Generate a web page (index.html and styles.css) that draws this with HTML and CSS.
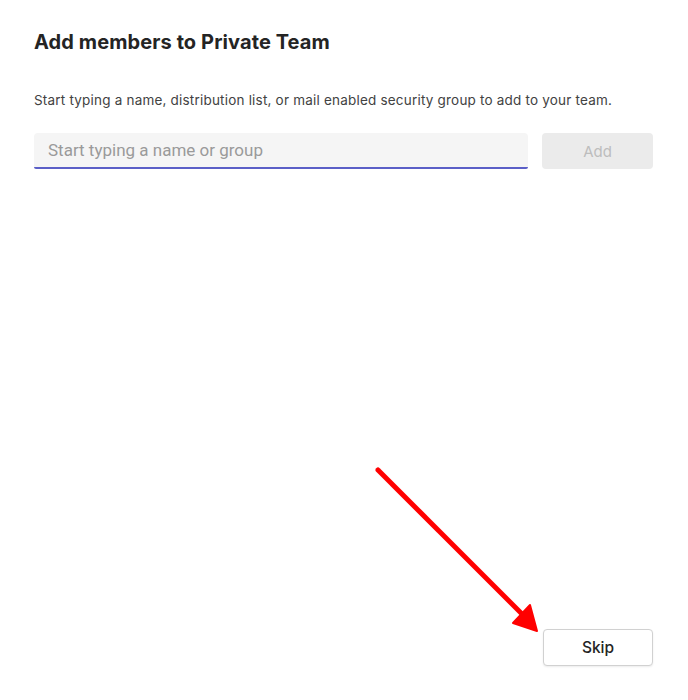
FILE: index.html
```html
<!DOCTYPE html>
<html>
<head>
<meta charset="utf-8">
<link rel="stylesheet" href="styles.css">
</head>
<body>
<div class="dialog">
  <h1 class="title">Add members to Private Team</h1>
  <p class="desc">Start typing a name, distribution list, or mail enabled security group to add to your team.</p>
  <div class="row">
    <div class="field"><input class="input" type="text" placeholder="Start typing a name or group"></div>
    <button class="btn btn-add" disabled>Add</button>
  </div>
  <div class="spacer"></div>
  <div class="footer">
    <button class="btn btn-skip">Skip</button>
  </div>
</div>
<svg class="arrow" width="688" height="700" viewBox="0 0 688 700">
  <line x1="378" y1="470" x2="522" y2="614" stroke="#f00" stroke-width="5" stroke-linecap="round"/>
  <polygon points="537,631 513,623 530,605" fill="#f00" stroke="#f00" stroke-width="2" stroke-linejoin="round"/>
</svg>
</body>
</html>
```
FILE: styles.css
```css
html, body {
  margin: 0;
  padding: 0;
  background: #fff;
}
body {
  width: 688px;
  height: 700px;
  position: relative;
  font-family: "Inter", "Liberation Sans", sans-serif;
  color: #242424;
}
.dialog {
  box-sizing: border-box;
  height: 700px;
  padding: 29px 35px 34px 34px;
  display: flex;
  flex-direction: column;
}
.title {
  margin: 0;
  font-size: 20px;
  font-weight: 700;
  line-height: 26px;
  letter-spacing: 0.1px;
  color: #242424;
}
.desc {
  margin: 36px 0 0;
  font-size: 13.5px;
  line-height: 18px;
  letter-spacing: 0.2px;
  color: #424242;
}
.row {
  display: flex;
  gap: 14px;
  margin-top: 24px;
}
.field {
  flex: 1;
}
.input {
  box-sizing: border-box;
  width: 100%;
  height: 36px;
  border: none;
  border-bottom: 2px solid #5b5fc7;
  border-radius: 4px 4px 2px 2px;
  background: #f5f5f5;
  padding: 0 14px;
  font-family: "Roboto", "Liberation Sans", sans-serif;
  font-size: 17px;
  outline: none;
}
.input::placeholder {
  color: #9a9a9a;
}
.btn {
  box-sizing: border-box;
  width: 111px;
  height: 36px;
  border-radius: 4px;
  font-family: "Inter", "Liberation Sans", sans-serif;
  font-size: 15px;
}
.btn-add {
  border: none;
  background: #ebebeb;
  color: #bdbdbd;
}
.spacer {
  flex: 1;
}
.footer {
  display: flex;
  justify-content: flex-end;
}
.btn-skip {
  width: 110px;
  height: 37px;
  background: #fff;
  border: 1px solid #d1d1d1;
  color: #242424;
  font-size: 15.5px;
  font-weight: 500;
  box-shadow: 0 1px 2px rgba(0,0,0,0.08);
}
.arrow {
  position: absolute;
  left: 0;
  top: 0;
  pointer-events: none;
}
```
